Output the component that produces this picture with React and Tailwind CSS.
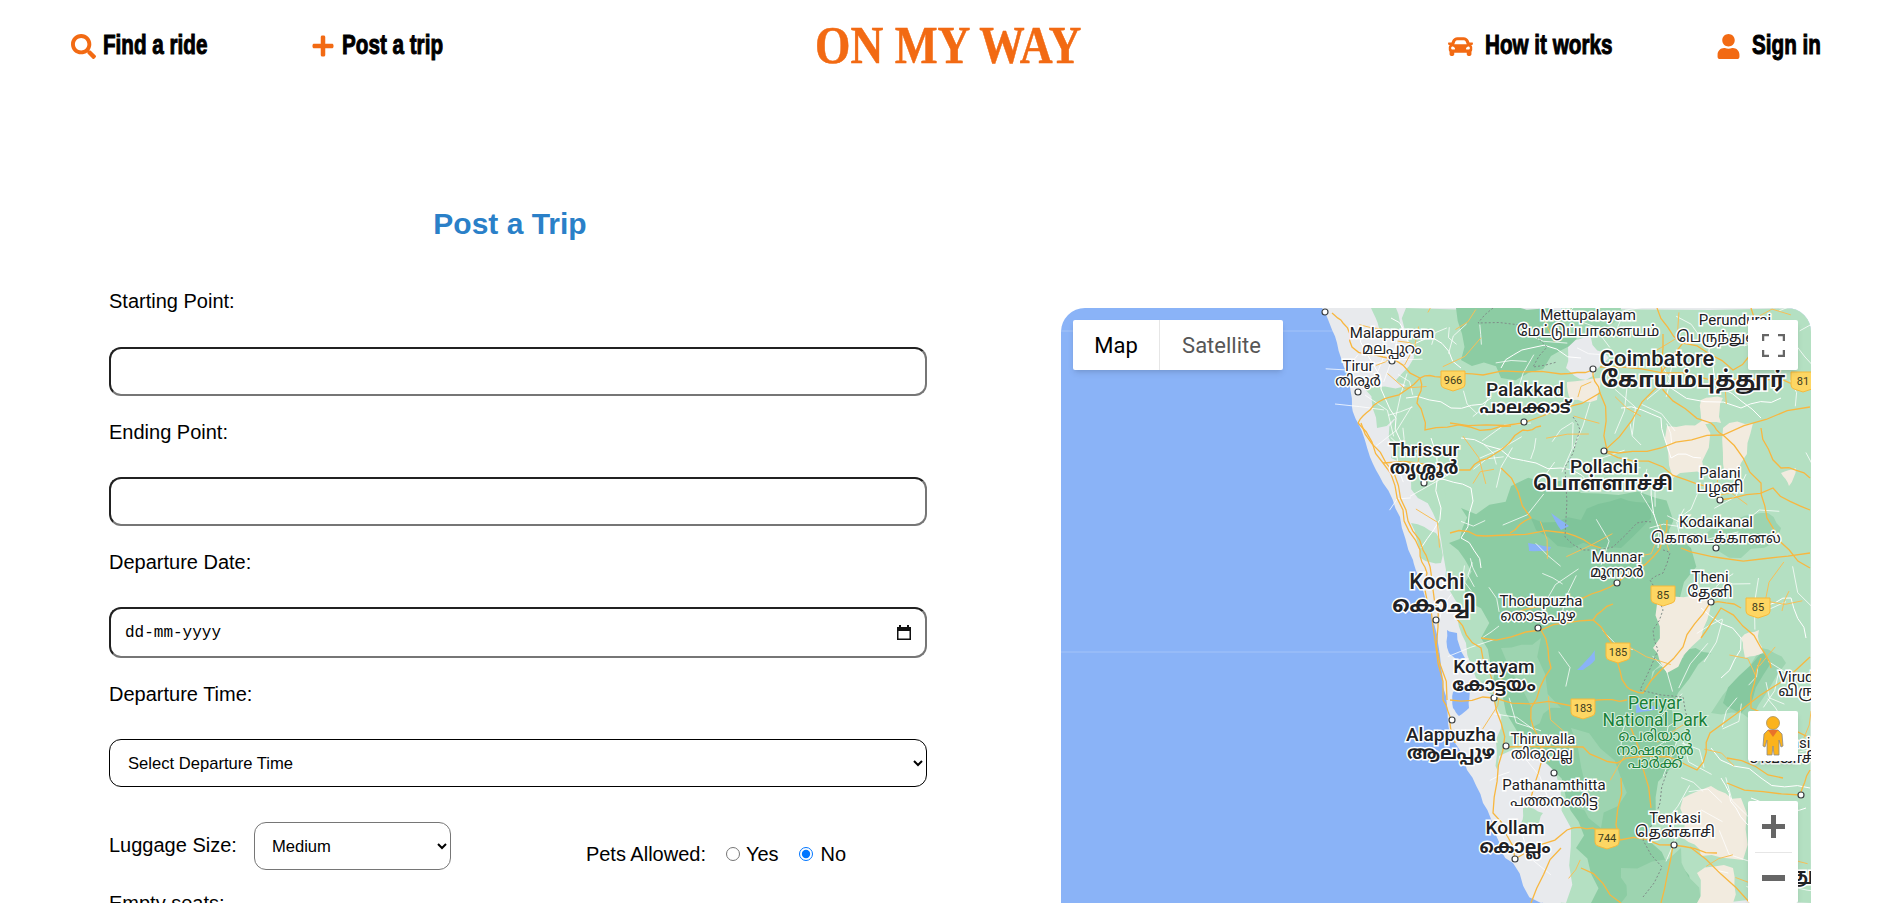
import { FaSearch, FaPlus, FaCar, FaUser } from 'react-icons/fa';

const NavLink = ({ icon, label, width }) => {
  return (
    <a className="flex items-center gap-[7px] cursor-pointer">
      {icon}
      <span className={`block ${width}`}>
        <span className="inline-block origin-left scale-x-[0.765] whitespace-nowrap font-['Liberation_Sans',sans-serif] font-bold text-[27px] leading-none text-black [-webkit-text-stroke:1px_black]">{label}</span>
      </span>
    </a>
  );
};

const Navbar = () => {
  return (
    <div className="flex items-center h-[92px]">
      <div className="flex-1 flex items-center gap-[104px] pl-[71px]">
        <NavLink icon={<FaSearch className="text-[#f26a13] text-[25px]" />} label="Find a ride" width="w-[104px]" />
        <NavLink icon={<FaPlus className="text-[#f26a13] text-[24px]" />} label="Post a trip" width="w-[102px]" />
      </div>
      <div className="flex justify-center w-[265px] ml-[3px] whitespace-nowrap">
        <span className="inline-block scale-x-[0.875] font-['Liberation_Serif',serif] font-bold text-[52px] leading-none text-[#f26a13] [-webkit-text-stroke:0.5px_#f26a13]">ON MY WAY</span>
      </div>
      <div className="flex-1 flex items-center justify-end gap-[103px] pr-[73px]">
        <NavLink icon={<FaCar className="text-[#f26a13] text-[25px] mr-[5px]" />} label="How it works" width="w-[128px]" />
        <NavLink icon={<FaUser className="text-[#f26a13] text-[25px] mr-[4px]" />} label="Sign in" width="w-[70px]" />
      </div>
    </div>
  );
};

const labelCls = "block h-[23px] leading-[23px] text-[20px] text-black";
const boxCls = "block w-full rounded-xl border-2 [border-style:inset] border-[#767676] bg-white outline-none";

const PostForm = () => {
  return (
    <div className="flex-none w-[818px] font-['Liberation_Sans',Arial,sans-serif]">
      <h1 className="h-[36px] mt-[114px] mb-[48px] pr-[16px] text-center text-[30px] leading-[36px] font-bold text-[#2a80c8]">Post a Trip</h1>

      <label className={labelCls}>Starting Point:</label>
      <input type="text" className={`${boxCls} h-[49px] mt-[34px]`} />

      <label className={`${labelCls} mt-[25px]`}>Ending Point:</label>
      <input type="text" className={`${boxCls} h-[49px] mt-[33px]`} />

      <label className={`${labelCls} mt-[25px]`}>Departure Date:</label>
      <div className="relative mt-[33px]">
        <input type="text" readOnly value="dd-mm-yyyy" className={`${boxCls} h-[51px] pl-[14px] font-['Liberation_Mono',monospace] text-[16px] text-black`} />
        <svg className="absolute right-[15px] top-[17px] w-[16px] h-[17px]" viewBox="0 0 16 17">
          <path d="M3 1h2v2h6V1h2v2h2v13H1V3h2V1zm-.5 6v7.5h11V7h-11z" fill="#111" />
        </svg>
      </div>

      <label className={`${labelCls} mt-[25px]`}>Departure Time:</label>
      <select defaultValue="" className="block w-full h-[48px] mt-[33px] pl-[14px] pr-[3px] rounded-xl border border-black bg-white text-[16.6px] text-black">
        <option value="">Select Departure Time</option>
        <option>Morning</option>
        <option>Afternoon</option>
        <option>Evening</option>
      </select>

      <div className="flex mt-[35px]">
        <div className="flex items-center gap-[17px]">
          <label className="pb-[3px] text-[20px] text-black">Luggage Size:</label>
          <select defaultValue="Medium" className="w-[197px] h-[48px] pl-[13px] pr-[3px] rounded-xl border border-[#767676] bg-white text-[16.6px] text-black">
            <option>Small</option>
            <option>Medium</option>
            <option>Large</option>
          </select>
        </div>
        <div className="flex items-center ml-[135px] mt-[15px] text-[20px] text-black">
          <span>Pets Allowed:</span>
          <input type="radio" name="pets" className="ml-[20px] w-[14px] h-[14px]" />
          <span className="ml-[6px]">Yes</span>
          <input type="radio" name="pets" defaultChecked className="ml-[20px] w-[14px] h-[14px]" />
          <span className="ml-[8px]">No</span>
        </div>
      </div>

      <label className={`${labelCls} mt-[22px]`}>Empty seats:</label>
    </div>
  );
};

// small wiggle so the map lines don't look ruler straight
const rough = (pts, amp, depth = 2) => {
  let out = pts;
  for (let d = 0; d < depth; d++) {
    const next = [];
    out.forEach((p, i) => {
      next.push(p);
      const q = out[i + 1];
      if (!q) return;
      const dx = q[0] - p[0];
      const dy = q[1] - p[1];
      const len = Math.hypot(dx, dy) || 1;
      const k = Math.sin(p[0] * 12.9898 + p[1] * 78.233) * amp * Math.min(1, len / 30);
      next.push([(p[0] + q[0]) / 2 - (dy / len) * k, (p[1] + q[1]) / 2 + (dx / len) * k]);
    });
    out = next;
  }
  return out;
};
const line = (pts) => pts.map((p) => `${p[0].toFixed(1)},${p[1].toFixed(1)}`).join(' ');

const orangeRoads = [
  [[271,5],[282,15],[291,39],[322,49],[359,70],[379,69],[422,67],[500,66],[532,62]],
  [[297,115],[322,155],[342,202],[359,242],[366,265],[372,319],[382,392],[389,415],[394,435]],
  [[300,115],[325,155],[345,202],[362,242],[370,265],[377,319],[386,392]],
  [[297,115],[309,102],[329,89],[359,70]],
  [[359,70],[356,95],[364,122],[409,119],[450,118]],
  [[322,155],[409,162],[432,147],[462,122],[480,118]],
  [[389,115],[462,115],[539,85],[546,142]],
  [[532,61],[539,85]],
  [[543,143],[602,159],[649,179],[659,192]],
  [[543,143],[600,140],[662,127],[749,99]],
  [[662,127],[650,115],[602,82],[602,26]],
  [[543,143],[596,79],[622,35],[596,0]],
  [[539,59],[622,65],[722,72],[749,75]],
  [[622,35],[672,62],[700,30],[690,0]],
  [[659,192],[712,180],[749,202]],
  [[662,127],[700,175],[712,220],[749,260]],
  [[556,275],[592,249],[606,212]],
  [[556,275],[522,290],[470,300],[440,310]],
  [[389,225],[425,228],[505,225],[540,240]],
  [[532,312],[556,345],[566,379],[582,385],[622,339],[649,295],[680,300]],
  [[389,392],[433,390],[506,397],[536,392],[566,392]],
  [[444,439],[522,439],[556,455],[596,449],[636,462],[649,425],[749,349]],
  [[452,552],[506,522],[532,520],[559,532],[612,537],[656,545]],
  [[454,551],[432,505],[442,442],[433,390],[420,340],[395,310]],
  [[629,539],[689,595]],
  [[666,475],[739,487],[749,462]],
  [[666,450],[722,470]],
  [[612,537],[600,595]],
  [[520,560],[560,595]],
  [[500,540],[470,595]],
  [[420,330],[480,322],[532,312],[552,296]],
  [[480,322],[490,360],[470,400],[480,440],[470,490]],
  [[559,532],[560,470]],
  [[700,350],[690,400],[749,430]],
  [[640,330],[660,300],[700,340],[710,360]],
  [[570,420],[590,500]],
  [[700,120],[720,160],[749,170]],
  [[440,160],[470,210],[449,225]],
  [[620,240],[660,250],[749,245]],
];

const whiteRoads = [
  [[300,20],[320,70],[335,110],[350,150]],
  [[330,10],[350,40],[372,30],[400,60]],
  [[345,90],[390,100],[430,90]],
  [[370,130],[380,200],[360,240]],
  [[375,170],[410,180],[400,230],[420,260]],
  [[400,130],[450,150],[500,160],[540,180]],
  [[440,60],[470,40],[520,50]],
  [[560,100],[600,110],[610,150],[640,150]],
  [[610,80],[680,100],[720,90]],
  [[650,30],[660,80],[700,110]],
  [[590,170],[597,240]],
  [[640,300],[680,330],[660,370]],
  [[700,300],[730,290],[745,330]],
  [[660,470],[675,500],[700,530]],
  [[690,490],[720,510],[745,500]],
  [[650,440],[700,470],[749,480]],
];

// filler minor roads, seeded so every render gives the same map
const seeded = (count, seed) => {
  const out = [];
  let s = seed;
  const rnd = () => {
    s = (s * 16807) % 2147483647;
    return s / 2147483647;
  };
  for (let i = 0; i < count; i++) {
    const x = 290 + rnd() * 460;
    const y = rnd() * 595;
    if (x < 278 + y * 0.36) continue;
    const a = rnd() * 6.28;
    const b = a + (rnd() - 0.5) * 2;
    const l = 10 + rnd() * 18;
    // mountains have few roads
    if (x > 430 + (y - 300) * 0.3 && x < 590 && y > 190 && rnd() < 0.6) continue;
    out.push([[x, y], [x + Math.cos(a) * l, y + Math.sin(a) * l], [x + Math.cos(a) * l + Math.cos(b) * l, y + Math.sin(a) * l + Math.sin(b) * l]]);
  }
  return out;
};
const minorWhite = seeded(170, 4711);
const minorOrange = seeded(70, 9203);

const border = [
  [[432,0],[417,15],[459,17],[486,39],[472,59],[496,54]],
  [[512,109],[519,122],[512,145],[504,159],[504,229],[522,242],[552,239],[576,215],[592,214]],
  [[602,242],[609,245],[602,265],[589,272],[596,282],[602,302],[592,322],[597,342],[579,382],[622,389],[629,419]],
  [[606,464],[599,495],[582,532],[601,559],[582,589]],
];

const patches = [
  // green lowland
  ['#b4e0c2', [[345,0],[352,40],[335,72],[345,78],[335,110],[330,150],[350,170],[372,205],[385,262],[400,300],[405,335],[420,380],[440,420],[440,470],[470,500],[480,560],[500,595],[750,595],[750,0],[345,0]], 5],
  ['#b4e0c2', [[303,80],[345,78],[352,112],[316,120],[303,80]], 5],
  ['#b4e0c2', [[340,150],[395,150],[380,205],[350,170],[340,150]], 5],
  ['#b4e0c2', [[350,215],[375,225],[380,255],[360,250],[350,215]], 3],
  ['#b4e0c2', [[310,0],[335,0],[340,25],[318,20],[310,0]], 3],
  ['#e8eaed', [[505,32],[530,30],[548,50],[525,72],[505,60],[505,32]], 4],
  // grey plain behind Alappuzha and Kollam
  ['#e8eaed', [[438,448],[498,445],[510,520],[505,595],[480,595],[452,555],[434,525],[438,448]], 5],
  ['#b4e0c2', [[462,500],[482,505],[478,520],[460,515],[462,500]], 3],
  // ghats
  ['#8ccca3', [[395,0],[490,0],[515,20],[490,48],[440,70],[400,52],[395,0]], 7],
  ['#a0d7b3', [[500,0],[560,0],[540,25],[500,25],[500,0]], 4],
  ['#8ccca3', [[388,235],[400,200],[450,178],[520,185],[595,190],[608,222],[630,240],[600,300],[606,345],[590,372],[622,350],[650,345],[610,400],[608,462],[590,520],[622,560],[630,595],[530,595],[515,540],[505,490],[460,430],[430,380],[420,330],[404,275],[388,235]], 9],
  ['#9dd4b0', [[440,340],[480,330],[500,400],[470,420],[440,340]], 6],
  ['#9dd4b0', [[510,420],[560,470],[540,520],[515,500],[510,420]], 8],
  ['#7fc49a', [[470,210],[520,212],[560,190],[590,195],[560,240],[510,240],[470,210]], 6],
  ['#9dd4b0', [[650,405],[700,340],[725,355],[690,412],[650,405]], 6],
  ['#86c89f', [[662,395],[700,345],[710,355],[680,405],[662,395]], 4],
  ['#9dd4b0', [[640,230],[700,205],[720,220],[680,250],[640,230]], 6],
  ['#9dd4b0', [[560,560],[620,540],[640,595],[560,595],[560,560]], 6],
  // dry plains
  ['#f2ebdf', [[506,74],[539,70],[536,92],[510,92],[506,74]], 3],
  ['#f2ebdf', [[606,118],[642,112],[644,168],[612,170],[606,118]], 5],
  ['#f2ebdf', [[640,92],[662,90],[660,115],[642,116],[640,92]], 3],
  ['#f2ebdf', [[662,120],[692,115],[680,155],[664,168],[662,120]], 4],
  ['#f2ebdf', [[720,165],[735,160],[728,178],[720,165]], 2],
  ['#f2ebdf', [[596,296],[650,292],[640,330],[606,365],[592,340],[596,296]], 5],
  ['#f2ebdf', [[622,490],[650,478],[680,490],[682,552],[640,548],[622,530],[622,490]], 6],
  ['#f2ebdf', [[636,565],[672,560],[672,595],[636,595],[636,565]], 4],
  ['#f2ebdf', [[680,330],[698,322],[702,345],[684,350],[680,330]], 3],
  // lakes
  ['#8ab3f7', [[386,322],[396,325],[404,350],[396,352],[388,345],[386,322]], 2],
  ['#8ab3f7', [[392,384],[409,380],[408,400],[398,408],[392,400],[392,384]], 2],
  ['#8ab3f7', [[467,235],[490,239],[488,243],[468,243],[467,235]], 1],
  ['#8ab3f7', [[490,205],[508,218],[500,222],[490,205]], 1],
  ['#8ab3f7', [[516,362],[534,342],[534,352],[522,362],[516,362]], 1],
  ['#8ab3f7', [[575,395],[600,400],[575,405],[575,395]], 1],
];

const coast = [[261,0],[266,9],[276,35],[286,65],[291,99],[297,115],[309,149],[322,175],[339,209],[352,252],[356,265],[371,312],[377,335],[382,379],[387,415],[394,435],[406,462],[422,495],[434,525],[452,555],[469,575],[482,595]];

const dots = [[264,4],[331,53],[297,84],[363,175],[532,61],[463,114],[543,143],[659,192],[655,240],[556,275],[375,312],[391,412],[477,320],[433,390],[445,438],[493,465],[454,551],[613,537],[740,487],[650,294]];
const shields = [[392,72,'966'],[742,73,'81'],[602,287,'85'],[697,299,'85'],[557,344,'185'],[522,400,'183'],[546,530,'744']];

const sm = "text-[15px]";
const md = "text-[19px] font-medium";
const mdb = "text-[18px] font-bold";
const lbls = [
  [331,30,'Malappuram',sm],[331,46,'മലപ്പുറം',sm],[297,63,'Tirur',sm],[297,78,'തിരൂർ',sm],
  [363,148,'Thrissur',md],[363,166,'തൃശ്ശൂർ',mdb],[376,281,'Kochi',"text-[22px] font-medium"],[373,304,'കൊച്ചി',"text-[22px] font-bold"],
  [527,12,'Mettupalayam',sm],[527,28,'மேட்டுப்பாளையம்',sm],[674,17,'Perundurai',sm],[665,34,'பெருந்துறை',sm],
  [596,58,'Coimbatore',"text-[22px] font-medium"],[632,79,'கோயம்புத்தூர்',"text-[22px] font-bold"],
  [464,88,'Palakkad',md],[464,105,'പാലക്കാട്',"text-[17px] font-bold"],[543,165,'Pollachi',md],[542,182,'பொள்ளாச்சி',"text-[19px] font-bold"],
  [659,170,'Palani',sm],[659,184,'பழனி',sm],[655,219,'Kodaikanal',sm],[655,235,'கொடைக்கானல்',sm],
  [556,254,'Munnar',sm],[556,269,'മൂന്നാർ',sm],[649,274,'Theni',sm],[649,289,'தேனி',sm],
  [480,298,'Thodupuzha',sm],[477,313,'തൊടുപുഴ',sm],[433,365,'Kottayam',md],[433,383,'കോട്ടയം',mdb],
  [390,433,'Alappuzha',md],[390,451,'ആലപ്പുഴ',mdb],[482,436,'Thiruvalla',sm],[481,451,'തിരുവല്ല',sm],
  [493,482,'Pathanamthitta',sm],[493,498,'പത്തനംതിട്ട',sm],[454,526,'Kollam',md],[454,545,'കൊല്ലം',mdb],
  [614,515,'Tenkasi',sm],[614,529,'தென்காசி',sm],[735,374,'Virud',sm],[735,388,'விரு',sm],
  [722,440,'Sivakasi',sm],[722,455,'சிவகாசி',sm],[745,573,'தூ',"text-[18px] font-bold"],
];
const parkLbls = [
  [594,401,'Periyar',"text-[17.5px]"],[594,418,'National Park',"text-[17.5px]"],[594,433,'പെരിയാർ',sm],[594,447,'നാഷണൽ',sm],[594,460,'പാർക്ക്',sm],
];

const MapDrawing = () => {
  return (
    <svg className="absolute inset-0 w-[750px] h-[700px] font-['Roboto','Noto_Sans',sans-serif]" viewBox="0 0 750 700">
      <rect width="750" height="700" fill="#8ab3f7" />
      <path d="M0 23H750M0 344H750" stroke="#a3c3f8" strokeWidth="1" />
      <polygon fill="#e8eaed" points={line([...rough(coast, 1.5), [482,700], [750,700], [750,0]])} />
      {patches.map(([color, pts, amp], i) => <polygon key={i} fill={color} points={line(rough(pts, amp))} />)}
      {minorWhite.map((r, i) => <polyline key={i} points={line(r)} fill="none" stroke="#ffffff" strokeWidth="0.9" opacity="0.85" />)}
      {whiteRoads.map((r, i) => <polyline key={i} points={line(rough(r, 4))} fill="none" stroke="#ffffff" strokeWidth="1" />)}
      {minorOrange.map((r, i) => <polyline key={i} points={line(r)} fill="none" stroke="#f8bf57" strokeWidth="1" />)}
      {orangeRoads.map((r, i) => <polyline key={i} points={line(rough(r, 3))} fill="none" stroke="#f8b740" strokeWidth="1.3" />)}
      {border.map((r, i) => <polyline key={i} points={line(rough(r, 2, 1))} fill="none" stroke="#7f8c88" strokeWidth="1" strokeDasharray="2 2" />)}
      {dots.map(([x, y], i) => <circle key={i} cx={x} cy={y} r="3" fill="#ffffff" stroke="#3c4043" strokeWidth="1.2" />)}
      {shields.map(([x, y, t]) => (
        <g key={`${x}-${y}`}>
          <path d={`M${x - 12} ${y - 9}h24v13q0 3 -3 4l-9 3l-9 -3q-3 -1 -3 -4z`} fill="#fdd663" stroke="#f6b93b" strokeWidth="1" />
          <text x={x} y={y + 4} textAnchor="middle" className="text-[11px] fill-[#3c3c1e]">{t}</text>
        </g>
      ))}
      {lbls.map(([x, y, t, cls]) => (
        <text key={t} x={x} y={y} textAnchor="middle" className={`${cls} fill-[#202124] stroke-white stroke-[3px] [paint-order:stroke] font-['Roboto','Noto_Sans','Noto_Sans_Malayalam','Noto_Sans_Tamil',sans-serif]`}>{t}</text>
      ))}
      {parkLbls.map(([x, y, t, cls]) => (
        <text key={t} x={x} y={y} textAnchor="middle" className={`${cls} fill-[#188038] stroke-[#d9f0df] stroke-[2px] [paint-order:stroke] font-['Roboto','Noto_Sans','Noto_Sans_Malayalam',sans-serif]`}>{t}</text>
      ))}
    </svg>
  );
};

const MapPanel = () => {
  return (
    <div className="relative flex-none w-[750px] h-[700px] mt-[216px] rounded-3xl overflow-hidden font-['Roboto',sans-serif]">
      <MapDrawing />

      <div className="absolute left-[12px] top-[12px] flex h-[50px] rounded-[2px] bg-white shadow-md text-[22px]">
        <button className="w-[87px] text-black border-r border-[#e6e6e6]">Map</button>
        <button className="w-[123px] text-[#565656]">Satellite</button>
      </div>

      <button className="absolute right-[13px] top-[12px] w-[50px] h-[50px] flex items-center justify-center rounded-[2px] bg-white shadow-md">
        <svg className="w-[23px] h-[23px]" viewBox="0 0 23 23" fill="none" stroke="#666666" strokeWidth="2.5">
          <path d="M1 7V1H7M16 1H22V7M22 16V22H16M7 22H1V16" />
        </svg>
      </button>

      <button className="absolute right-[13px] top-[403px] w-[50px] h-[50px] flex items-center justify-center rounded-[2px] bg-white shadow-md">
        <svg className="w-[22px] h-[40px]" viewBox="0 0 22 40">
          <circle cx="11" cy="7" r="6.5" fill="#fbb31c" stroke="#a9905a" strokeWidth="0.8" />
          <path d="M6 14h10l4 4 1 12-2 1-2-7v15H12l-1-9-1 9H5V24l-2 7-2-1 1-12z" fill="#fbb31c" stroke="#8a8a8a" strokeWidth="0.8" />
          <path d="M6 14h10l-5 7z" fill="#e8722a" />
        </svg>
      </button>

      <div className="absolute right-[13px] top-[493px] w-[50px] h-[102px] flex flex-col items-center rounded-[2px] bg-white shadow-md">
        <div className="flex-1 flex items-center justify-center">
          <svg className="w-[23px] h-[23px]" viewBox="0 0 23 23"><path d="M9 0h5v9h9v5h-9v9H9v-9H0V9h9z" fill="#666666" /></svg>
        </div>
        <div className="w-[37px] h-px bg-[#e6e6e6]" />
        <div className="flex-1 flex items-center justify-center">
          <svg className="w-[23px] h-[6px]" viewBox="0 0 23 6"><rect width="23" height="6" fill="#666666" /></svg>
        </div>
      </div>
    </div>
  );
};

export default function App() {
  return (
    <div className="h-[903px] overflow-hidden bg-white">
      <Navbar />
      <div className="flex pl-[109px] gap-[134px]">
        <PostForm />
        <MapPanel />
      </div>
    </div>
  );
}
